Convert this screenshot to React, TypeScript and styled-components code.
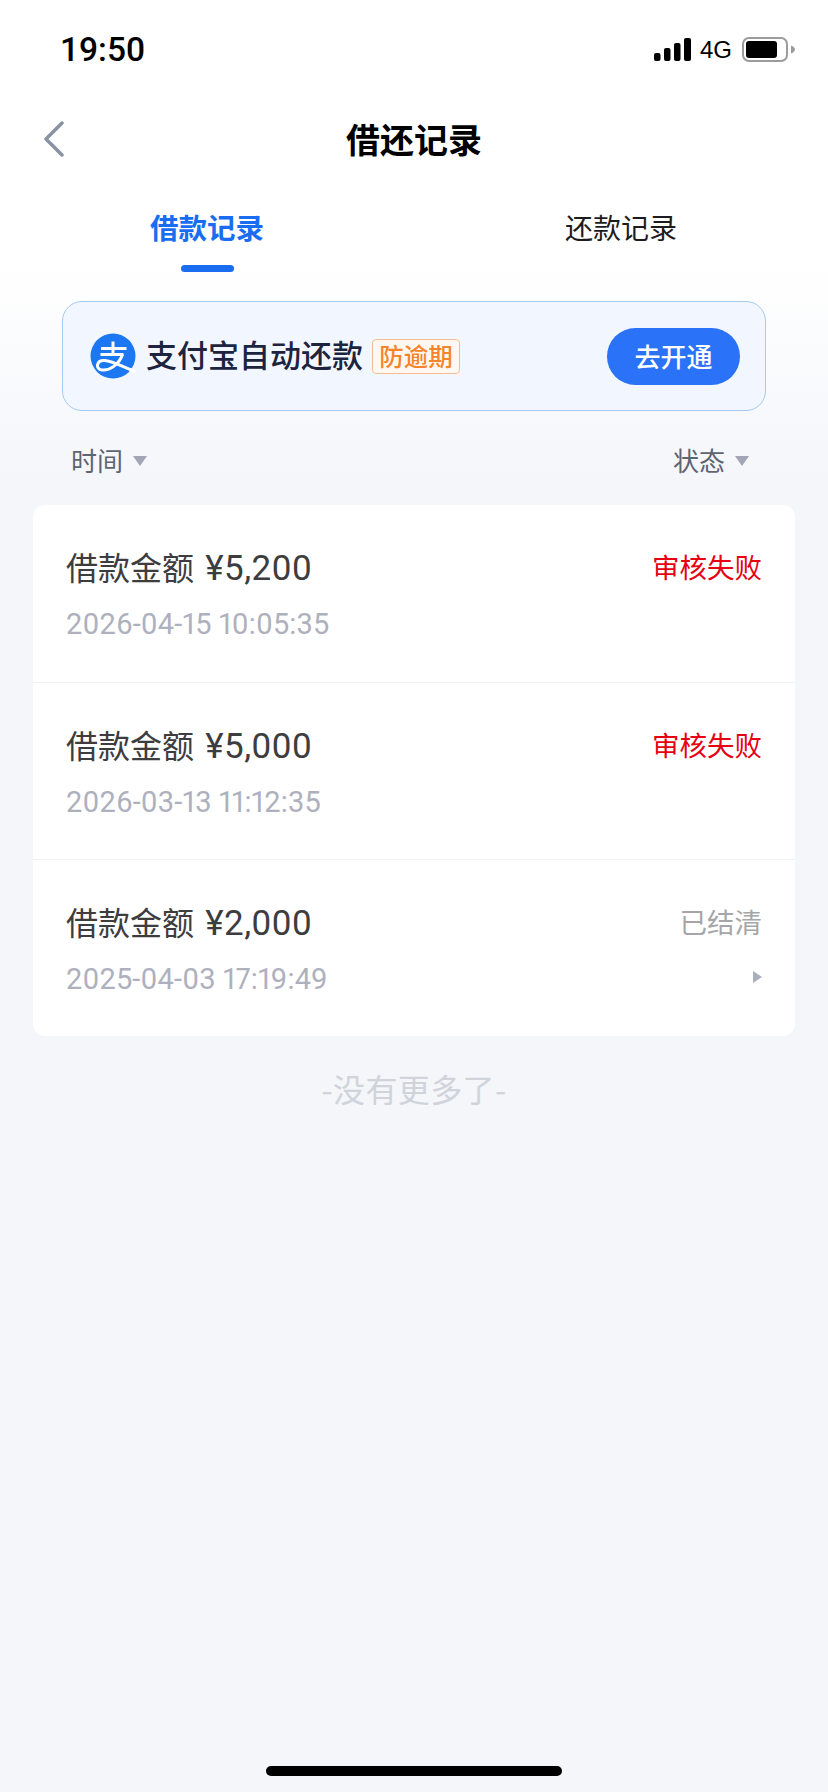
import { createGlobalStyle, styled } from "styled-components"

const GlobalStyle = createGlobalStyle`
* { box-sizing: border-box; }
html, body { margin: 0; padding: 0; background: #f4f6fa; }
body { font-family: "Noto Sans CJK SC", "Noto Sans", sans-serif; }
`

interface Record {
  amount: string
  time: string
  status: string
  failed: boolean
  arrow: boolean
}

const records: Record[] = [
  { amount: "¥5,200", time: "2026-04-15 10:05:35", status: "审核失败", failed: true, arrow: false },
  { amount: "¥5,000", time: "2026-03-13 11:12:35", status: "审核失败", failed: true, arrow: false },
  { amount: "¥2,000", time: "2025-04-03 17:19:49", status: "已结清", failed: false, arrow: true },
]

function AlipayLogo() {
  return (
    <svg width="46" height="46" viewBox="4.5 4.5 46 46" style={{ flexShrink: 0 }}>
      <circle cx="27.5" cy="27.5" r="22.5" fill="#1b78f2" />
      <g fill="none" stroke="#fff" strokeWidth="3" strokeLinecap="butt">
        <path d="M15.5 20H41" />
        <path d="M27.5 13V26" />
        <path d="M15 26H38" />
        <path d="M37 26C33.5 36 24 42.5 16.5 41.5C9.5 40.5 11 31.5 19 32C27 32.5 38 38.5 50 43" />
      </g>
    </svg>
  )
}

export default function App() {
  return (
    <Page>
      <GlobalStyle />
      <StatusBar>
        <Clock>19:50</Clock>
        <StatusIcons>
          <svg width="37" height="23" viewBox="0 0 37 23">
            <rect x="0" y="15" width="6.5" height="8" rx="2" />
            <rect x="10" y="10" width="6.5" height="13" rx="2" />
            <rect x="20" y="5" width="6.5" height="18" rx="2" />
            <rect x="30" y="0" width="7" height="23" rx="2" />
          </svg>
          <Network>4G</Network>
          <svg width="53" height="25" viewBox="0 0 53 25">
            <rect x="1" y="1" width="44" height="23" rx="6" fill="none" stroke="#9b9b9b" strokeWidth="2" />
            <rect x="4" y="4" width="31" height="17" rx="3" fill="#000" />
            <path d="M49 8.5C51.5 9.5 53 11 53 12.5C53 14 51.5 15.5 49 16.5Z" fill="#9b9b9b" />
          </svg>
        </StatusIcons>
      </StatusBar>

      <NavBar>
        <BackIcon width="20" height="36" viewBox="0 0 20 36">
          <path d="M18 2L2 18L18 34" fill="none" stroke="#8a93a3" strokeWidth="3.5" strokeLinecap="round" strokeLinejoin="round" />
        </BackIcon>
        <NavTitle>借还记录</NavTitle>
      </NavBar>

      <Tabs>
        <Tab $active>
          借款记录
          <TabLine />
        </Tab>
        <Tab>还款记录</Tab>
      </Tabs>

      <Banner>
        <BannerLeft>
          <AlipayLogo />
          <BannerText>支付宝自动还款</BannerText>
          <Tag>防逾期</Tag>
        </BannerLeft>
        <OpenButton>去开通</OpenButton>
      </Banner>

      <Filters>
        <Filter>
          时间
          <DownArrow />
        </Filter>
        <Filter>
          状态
          <DownArrow />
        </Filter>
      </Filters>

      <Card>
        {records.map((r) => (
          <Row key={r.time}>
            <RowLine>
              <Amount>
                借款金额 <AmountNumber>{r.amount}</AmountNumber>
              </Amount>
              <Status $failed={r.failed}>{r.status}</Status>
            </RowLine>
            <TimeLine>
              <Time>{r.time}</Time>
              {r.arrow && <RightArrow />}
            </TimeLine>
          </Row>
        ))}
      </Card>

      <NoMore>-没有更多了-</NoMore>
      <HomeBar />
    </Page>
  )
}

const Page = styled.div`
  position: relative;
  width: 828px;
  height: 1792px;
  overflow: hidden;
  background: linear-gradient(180deg, #ffffff 0, #ffffff 260px, #f4f6fa 480px, #f4f6fa 100%);
`
const StatusBar = styled.div`
  height: 98px;
  display: flex;
  justify-content: space-between;
  padding: 33px 33px 0 60px;
`
const Clock = styled.div`
  font-family: "Roboto", Arial, sans-serif;
  font-size: 33.5px;
  font-weight: 500;
  line-height: 33px;
  color: #000;
`
const StatusIcons = styled.div`
  display: flex;
  align-items: center;
  height: 33px;
  svg {
    display: block;
  }
`
const Network = styled.span`
  font-family: "Liberation Sans", Arial, sans-serif;
  font-size: 24px;
  line-height: 24px;
  color: #000;
  margin: 0 10px 0 9px;
`
const NavBar = styled.div`
  position: relative;
  height: 84px;
  display: flex;
  align-items: center;
  justify-content: center;
  padding-bottom: 4px;
`
const BackIcon = styled.svg`
  position: absolute;
  left: 44px;
  top: 23px;
`
const NavTitle = styled.div`
  font-size: 34px;
  font-weight: 700;
  color: #000;
`
const Tabs = styled.div`
  display: grid;
  grid-template-columns: 1fr 1fr;
  height: 90px;
`
const Tab = styled.div<{ $active?: boolean }>`
  display: flex;
  flex-direction: column;
  align-items: center;
  padding-top: 25px;
  font-size: ${(p) => (p.$active ? "28.5px" : "28px")};
  line-height: 40px;
  font-weight: ${(p) => (p.$active ? 700 : 400)};
  color: ${(p) => (p.$active ? "#1a6cf0" : "#1c1c1e")};
`
const TabLine = styled.div`
  width: 53px;
  height: 7px;
  border-radius: 4px;
  background: #1a6cf0;
  margin-top: 18px;
`
const Banner = styled.div`
  margin: 29px 62px 0 62px;
  height: 110px;
  border: 1px solid #a5caee;
  border-radius: 20px;
  background: #f2f7ff;
  display: flex;
  align-items: center;
  justify-content: space-between;
  padding: 0 25px 0 27px;
`
const BannerLeft = styled.div`
  display: flex;
  align-items: center;
`
const BannerText = styled.span`
  margin-left: 10px;
  font-size: 31px;
  font-weight: 500;
  line-height: 40px;
  padding-bottom: 4px;
  color: #1d2440;
  white-space: nowrap;
`
const Tag = styled.span`
  margin-left: 9px;
  width: 88px;
  height: 35px;
  border: 1px solid #f5bd8f;
  border-radius: 4px;
  background: #fff8f2;
  color: #f5842a;
  font-size: 24.5px;
  font-weight: 500;
  line-height: 32px;
  text-align: center;
  white-space: nowrap;
`
const OpenButton = styled.div`
  width: 133px;
  height: 57px;
  border-radius: 29px;
  background: #2a72f8;
  color: #fff;
  font-size: 26px;
  font-weight: 500;
  line-height: 55px;
  text-align: center;
`
const Filters = styled.div`
  height: 94px;
  display: flex;
  justify-content: space-between;
  align-items: center;
  padding: 2px 79px 0 71px;
`
const Filter = styled.div`
  display: flex;
  align-items: center;
  gap: 10px;
  font-size: 26px;
  color: #5d6472;
`
const DownArrow = styled.span`
  width: 0;
  height: 0;
  border-left: 7px solid transparent;
  border-right: 7px solid transparent;
  border-top: 10px solid #a1a5b5;
  margin-top: 3px;
`
const Card = styled.div`
  margin: 0 33px;
  background: #fff;
  border-radius: 12px;
  overflow: hidden;
`
const Row = styled.div`
  height: 177px;
  padding: 34px 33px 0 33px;
  & + & {
    border-top: 1px solid #f1f2f5;
  }
`
const RowLine = styled.div`
  display: flex;
  justify-content: space-between;
  align-items: center;
  height: 54px;
`
const Amount = styled.div`
  font-size: 32px;
  color: #3d3d40;
  white-space: nowrap;
`
const AmountNumber = styled.span`
  font-family: "Roboto", sans-serif;
  font-size: 35px;
  font-weight: 400;
  letter-spacing: 0.5px;
  margin-left: 4px;
`
const Status = styled.div<{ $failed: boolean }>`
  font-size: 27.5px;
  color: ${(p) => (p.$failed ? "#e60012" : "#a6a6a8")};
`
const TimeLine = styled.div`
  display: flex;
  justify-content: space-between;
  align-items: center;
  height: 56px;
  margin-top: 3px;
`
const Time = styled.div`
  font-family: "Roboto", sans-serif;
  font-size: 29px;
  font-weight: 400;
  font-variant-numeric: proportional-nums;
  letter-spacing: 0.15px;
  color: #aeb1bd;
`
const RightArrow = styled.span`
  width: 0;
  height: 0;
  border-top: 6px solid transparent;
  border-bottom: 6px solid transparent;
  border-left: 9px solid #a9aebb;
  margin-top: -4px;
`
const NoMore = styled.div`
  margin-top: 27px;
  text-align: center;
  font-size: 32px;
  line-height: 50px;
  letter-spacing: 0.4px;
  color: #d0d3da;
`
const HomeBar = styled.div`
  position: absolute;
  left: 266px;
  top: 1766px;
  width: 296px;
  height: 10px;
  border-radius: 5px;
  background: #000;
`
